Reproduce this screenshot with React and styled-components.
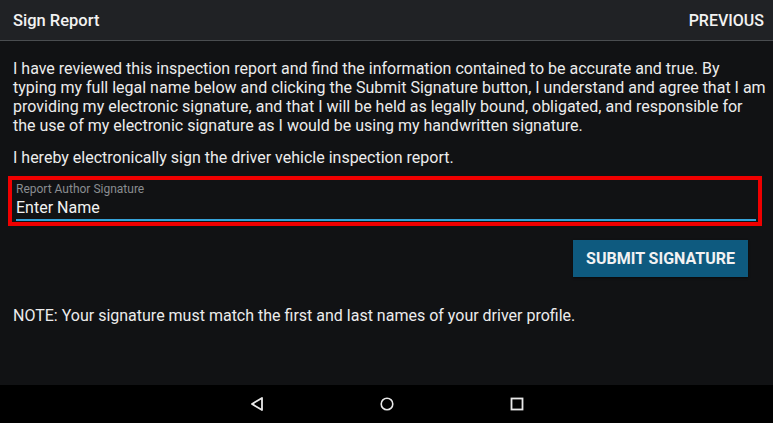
import styled, { createGlobalStyle } from "styled-components";

const GlobalStyle = createGlobalStyle`
  html, body {
    margin: 0;
    padding: 0;
    background: #111214;
    font-family: Roboto, "Noto Sans", sans-serif;
  }
`;

export default function App() {
  return (
    <Screen>
      <GlobalStyle />
      <Header>
        <Title>Sign Report</Title>
        <HeaderAction>PREVIOUS</HeaderAction>
      </Header>
      <Content>
        <Paragraph>
          I have reviewed this inspection report and find the information
          contained to be accurate and true. By
          <br />
          typing my full legal name below and clicking the Submit Signature
          button, I understand and agree that I am
          <br />
          providing my electronic signature, and that I will be held as legally
          bound, obligated, and responsible for
          <br />
          the use of my electronic signature as I would be using my handwritten
          signature.
        </Paragraph>
        <Paragraph>
          I hereby electronically sign the driver vehicle inspection report.
        </Paragraph>
        <Highlight>
          <Field>
            <FieldLabel>Report Author Signature</FieldLabel>
            <FieldInput placeholder="Enter Name" />
          </Field>
        </Highlight>
        <Actions>
          <SubmitButton>SUBMIT SIGNATURE</SubmitButton>
        </Actions>
        <Paragraph>
          NOTE: Your signature must match the first and last names of your
          driver profile.
        </Paragraph>
      </Content>
      <NavBar>
        <NavButton>
          <svg width="16" height="16" viewBox="0 0 16 16">
            <path d="M13 2 L3 8 L13 14 Z" fill="none" stroke="#e8e8e8" strokeWidth="1.8" strokeLinejoin="round" />
          </svg>
        </NavButton>
        <NavButton>
          <svg width="18" height="18" viewBox="0 0 18 18">
            <circle cx="9" cy="9" r="6.5" fill="none" stroke="#e8e8e8" strokeWidth="1.8" />
          </svg>
        </NavButton>
        <NavButton>
          <svg width="16" height="16" viewBox="0 0 16 16">
            <rect x="2.5" y="2.5" width="11" height="11" fill="none" stroke="#e8e8e8" strokeWidth="1.8" />
          </svg>
        </NavButton>
      </NavBar>
    </Screen>
  );
}

const Screen = styled.div`
  width: 773px;
  height: 423px;
  display: flex;
  flex-direction: column;
  background: #111214;
  overflow: hidden;
`;

const Header = styled.div`
  height: 41px;
  flex-shrink: 0;
  display: flex;
  align-items: center;
  justify-content: space-between;
  padding: 0 9px 0 13px;
  background: #202225;
  border-bottom: 1px solid #4a4d50;
  box-sizing: border-box;
`;

const Title = styled.div`
  color: #f2f2f2;
  font-size: 16.5px;
  font-weight: 500;
`;

const HeaderAction = styled.div`
  color: #f2f2f2;
  font-size: 16px;
  font-weight: 500;
`;

const Content = styled.div`
  flex: 1;
  padding: 18px 2px 0 13px;
  display: flex;
  flex-direction: column;
`;

const Paragraph = styled.p`
  margin: 0 0 13px;
  color: #ececec;
  font-size: 16px;
  line-height: 19px;
`;

const Highlight = styled.div`
  margin: -4px 0 0 -5px;
  width: 754px;
  border: 4px solid #f00000;
  padding: 0 2px 1px 4px;
  box-sizing: border-box;
`;

const Field = styled.div`
  display: flex;
  flex-direction: column;
  border-bottom: 2px solid #36a3d9;
`;

const FieldLabel = styled.div`
  color: #8a8d90;
  font-size: 12px;
  line-height: 14px;
  margin-top: 2px;
`;

const FieldInput = styled.input`
  background: transparent;
  border: none;
  outline: none;
  padding: 0;
  height: 23px;
  font-family: Roboto, sans-serif;
  font-size: 16px;
  color: #f2f2f2;
  &::placeholder {
    color: #f2f2f2;
  }
`;

const Actions = styled.div`
  display: flex;
  justify-content: flex-end;
  padding: 14px 23px 0 0;
  margin-bottom: 29px;
`;

const SubmitButton = styled.button`
  background: #0e5a7f;
  color: #f2f2f2;
  border: none;
  height: 37px;
  padding: 0 13px;
  font-family: Roboto, sans-serif;
  font-size: 16px;
  font-weight: 700;
  box-shadow: 0 1px 2px rgba(0, 0, 0, 0.5);
`;

const NavBar = styled.div`
  height: 38px;
  flex-shrink: 0;
  background: #000;
  display: flex;
  justify-content: center;
  align-items: center;
  gap: 114px;
`;

const NavButton = styled.div`
  width: 16px;
  display: flex;
  justify-content: center;
  align-items: center;
`;
